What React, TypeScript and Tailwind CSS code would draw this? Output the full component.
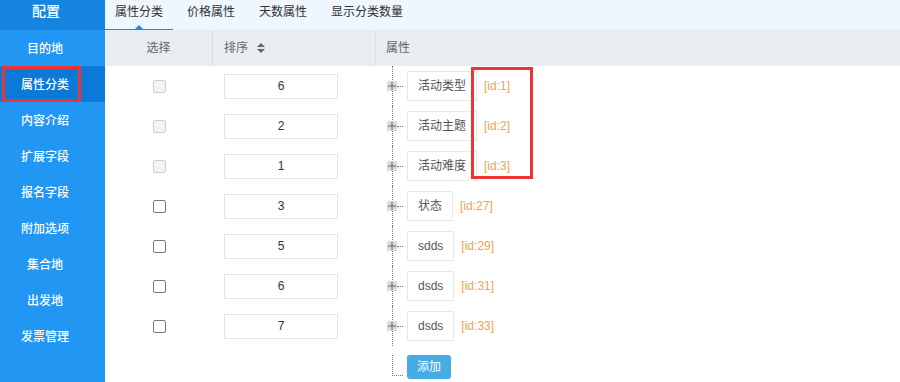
import React from "react";

const navItems = ["目的地", "属性分类", "内容介绍", "扩展字段", "报名字段", "附加选项", "集合地", "出发地", "发票管理"];
const tabs = ["属性分类", "价格属性", "天数属性", "显示分类数量"];

type Row = { sort: number; name: string; id: number; disabled: boolean };
const rows: Row[] = [
  { sort: 6, name: "活动类型", id: 1, disabled: true },
  { sort: 2, name: "活动主题", id: 2, disabled: true },
  { sort: 1, name: "活动难度", id: 3, disabled: true },
  { sort: 3, name: "状态", id: 27, disabled: false },
  { sort: 5, name: "sdds", id: 29, disabled: false },
  { sort: 6, name: "dsds", id: 31, disabled: false },
  { sort: 7, name: "dsds", id: 33, disabled: false },
];

const PlusBox = () => (
  <div className="relative z-10 w-[10px] h-[10px] bg-[#dcdcdc] flex items-center justify-center">
    <svg width="8" height="8" viewBox="0 0 8 8">
      <path d="M0 4h8M4 0v8" stroke="#666" strokeWidth="1" />
    </svg>
  </div>
);

const Checkbox = ({ disabled }: { disabled: boolean }) =>
  disabled ? (
    <div className="w-[13px] h-[13px] rounded-[2px] border border-[#cfcfcf] bg-[#f4f4f4]" />
  ) : (
    <div className="w-[13px] h-[13px] rounded-[2px] border border-[#7a7a7a] bg-white" />
  );

const SortIcon = () => (
  <svg width="8" height="10" viewBox="0 0 8 10" className="ml-[9px]">
    <path d="M4 0L8 4H0Z" fill="#666" />
    <path d="M4 10L8 6H0Z" fill="#666" />
  </svg>
);

export default function App() {
  return (
    <div className="relative flex w-[900px] h-[382px] overflow-hidden bg-white text-[12px] font-['Liberation_Sans','Noto_Sans_CJK_SC',sans-serif]">
      {/* sidebar */}
      <aside className="w-[105px] shrink-0 bg-[#2196f3] text-white">
        <div className="h-[30px] bg-[#1585e1]">
          <div className="w-[92px] pt-[3px] text-center text-[14px] leading-[16px] font-medium">配置</div>
        </div>
        {navItems.map((item) => (
          <div
            key={item}
            className={
              item === "属性分类"
                ? "h-[36px] flex items-center pt-[1px] bg-[#0b79d8]"
                : "h-[36px] flex items-center pt-[1px]"
            }
          >
            <div className="w-[90px] text-center font-medium">{item}</div>
          </div>
        ))}
      </aside>

      {/* main */}
      <main className="flex-1 flex flex-col">
        <div className="h-[30px] bg-[#eff7fe] flex gap-[4px]">
          {tabs.map((t, i) => (
            <div
              key={t}
              className={
                i === 0
                  ? "relative h-[30px] px-[10px] pt-[4px] leading-[16px] text-[#333] border-b-[1.5px] border-[#1a8be6]"
                  : "h-[30px] px-[10px] pt-[4px] leading-[16px] text-[#333]"
              }
            >
              {t}
              {i === 0 && (
                <div className="absolute left-1/2 -translate-x-1/2 bottom-0 w-0 h-0 border-l-[4px] border-r-[4px] border-b-[4px] border-l-transparent border-r-transparent border-b-[#1a8be6]" />
              )}
            </div>
          ))}
        </div>

        {/* table header */}
        <div className="h-[36px] bg-[#e9ecf0] grid grid-cols-[108px_163px_1fr] text-[#666]">
          <div className="flex items-center justify-center border-r border-[#dcdfe4]">选择</div>
          <div className="flex items-center pl-[11px] border-r border-[#dcdfe4]">
            排序
            <SortIcon />
          </div>
          <div className="flex items-center pl-[10px]">属性</div>
        </div>

        {/* rows */}
        {rows.map((r) => (
          <div key={r.id} className="h-[40px] grid grid-cols-[108px_163px_1fr]">
            <div className="flex items-center justify-center pl-[1px]">
              <Checkbox disabled={r.disabled} />
            </div>
            <div className="flex items-center pl-[11px]">
              <div className="w-[114px] h-[25px] border border-[#e6e6e6] flex items-center justify-center text-[#333]">
                {r.sort}
              </div>
            </div>
            <div className="relative flex items-center pl-[11px]">
              <div className="absolute left-[16px] top-0 bottom-0 border-l border-dotted border-[#777]" />
              <PlusBox />
              <div className="w-[6px] border-t border-dotted border-[#777]" />
              <div className="ml-[4px] h-[30px] px-[10px] border border-[#e8e8e8] flex items-center text-[#555] text-[12px]">
                {r.name}
              </div>
              <span className="ml-[7px] text-[#f5a24a]">[id:{r.id}]</span>
            </div>
          </div>
        ))}

        {/* add row */}
        <div className="grid grid-cols-[108px_163px_1fr]">
          <div />
          <div />
          <div className="relative flex pl-[16px] pt-[9px]">
            <div className="w-[11px] h-[21px] border-l border-b border-dotted border-[#777]" />
            <button className="ml-[4px] w-[44px] h-[24px] rounded-[3px] bg-[#45ade4] text-white text-[12px]">添加</button>
          </div>
        </div>
      </main>

      {/* highlight markers */}
      <div className="absolute left-[2px] top-[66px] w-[79px] h-[36px] border-[3px] border-[#ee3333]" />
      <div className="absolute left-[471px] top-[67px] w-[62px] h-[112px] border-[3px] border-[#ee3333]" />
    </div>
  );
}
